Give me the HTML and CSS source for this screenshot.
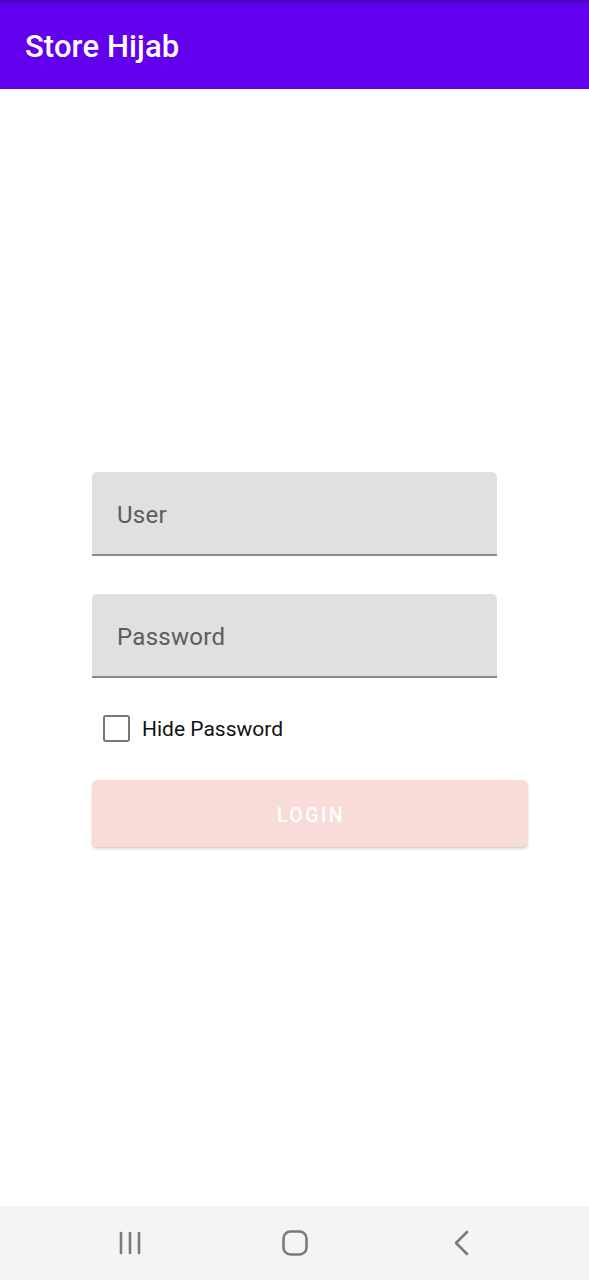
FILE: index.html
```html
<!DOCTYPE html>
<html>
<head>
<meta charset="utf-8">
<link rel="stylesheet" href="styles.css">
</head>
<body>
<div class="screen">
  <header class="appbar">
    <h1 class="title">Store Hijab</h1>
  </header>
  <main class="content">
    <div class="form">
      <div class="field"><span class="label">User</span></div>
      <div class="field field-second"><span class="label">Password</span></div>
      <label class="check-row">
        <span class="checkbox"></span>
        <span class="check-text">Hide Password</span>
      </label>
      <div class="button">LOGIN</div>
    </div>
  </main>
  <nav class="navbar">
    <svg class="nav-icon" width="24" height="24" viewBox="0 0 24 24">
      <g stroke="#7a7a7a" stroke-width="2.6" stroke-linecap="round">
        <line x1="2" y1="2" x2="2" y2="22"/>
        <line x1="11" y1="2" x2="11" y2="22"/>
        <line x1="20" y1="2" x2="20" y2="22"/>
      </g>
    </svg>
    <svg class="nav-icon" width="26" height="26" viewBox="0 0 26 26">
      <rect x="1.5" y="1.5" width="23" height="23" rx="7" fill="none" stroke="#7a7a7a" stroke-width="2.6"/>
    </svg>
    <svg class="nav-icon" width="18" height="26" viewBox="0 0 18 26">
      <polyline points="14,2 3,13 14,24" fill="none" stroke="#7a7a7a" stroke-width="2.6" stroke-linecap="round" stroke-linejoin="round"/>
    </svg>
  </nav>
</div>
</body>
</html>
```

FILE: styles.css
```css
html, body {
  margin: 0;
  padding: 0;
  background: #ffffff;
}
.screen {
  width: 589px;
  height: 1280px;
  display: flex;
  flex-direction: column;
  font-family: Roboto, "Noto Sans", sans-serif;
}
.appbar {
  height: 89px;
  box-sizing: border-box;
  background: #6200ee;
  border-top: 3px solid #4e00c4;
  display: flex;
  align-items: center;
  padding-left: 25px;
}
.title {
  margin: 0;
  color: #ffffff;
  font-size: 31px;
  font-weight: 500;
  letter-spacing: 0.1px;
}
.content {
  flex: 1;
  padding-top: 383px;
  padding-left: 92px;
}
.form {
  display: flex;
  flex-direction: column;
}
.field {
  width: 405px;
  height: 84px;
  box-sizing: border-box;
  background: #e0e0e0;
  border-radius: 5px 5px 0 0;
  border-bottom: 2px solid #8a8a8a;
  display: flex;
  align-items: center;
  padding-left: 25px;
  padding-top: 3px;
}
.field-second {
  margin-top: 38px;
}
.label {
  color: #5c5c5c;
  font-size: 24px;
  letter-spacing: 0.3px;
}
.check-row {
  display: flex;
  align-items: center;
  margin-top: 37px;
  margin-left: 11px;
  height: 27px;
}
.checkbox {
  width: 27px;
  height: 27px;
  box-sizing: border-box;
  border: 2.5px solid #777777;
  border-radius: 3px;
}
.check-text {
  margin-left: 12px;
  font-size: 21px;
  color: #111111;
}
.button {
  margin-top: 38px;
  width: 436px;
  height: 67px;
  box-sizing: border-box;
  background: #f9dcd8;
  border-radius: 5px;
  box-shadow: 0 2px 3px rgba(0, 0, 0, 0.14), 0 1px 1px rgba(0, 0, 0, 0.06);
  display: flex;
  align-items: center;
  justify-content: center;
  color: #ffffff;
  font-size: 19.5px;
  font-weight: 500;
  letter-spacing: 2.4px;
  padding-left: 2px;
  padding-top: 3px;
}
.navbar {
  height: 74px;
  background: #f4f4f4;
  display: flex;
  align-items: center;
}
.nav-icon {
  display: block;
}
.navbar .nav-icon:nth-child(1) {
  margin-left: 119px;
}
.navbar .nav-icon:nth-child(2) {
  margin-left: 139px;
}
.navbar .nav-icon:nth-child(3) {
  margin-left: 145px;
}
```
